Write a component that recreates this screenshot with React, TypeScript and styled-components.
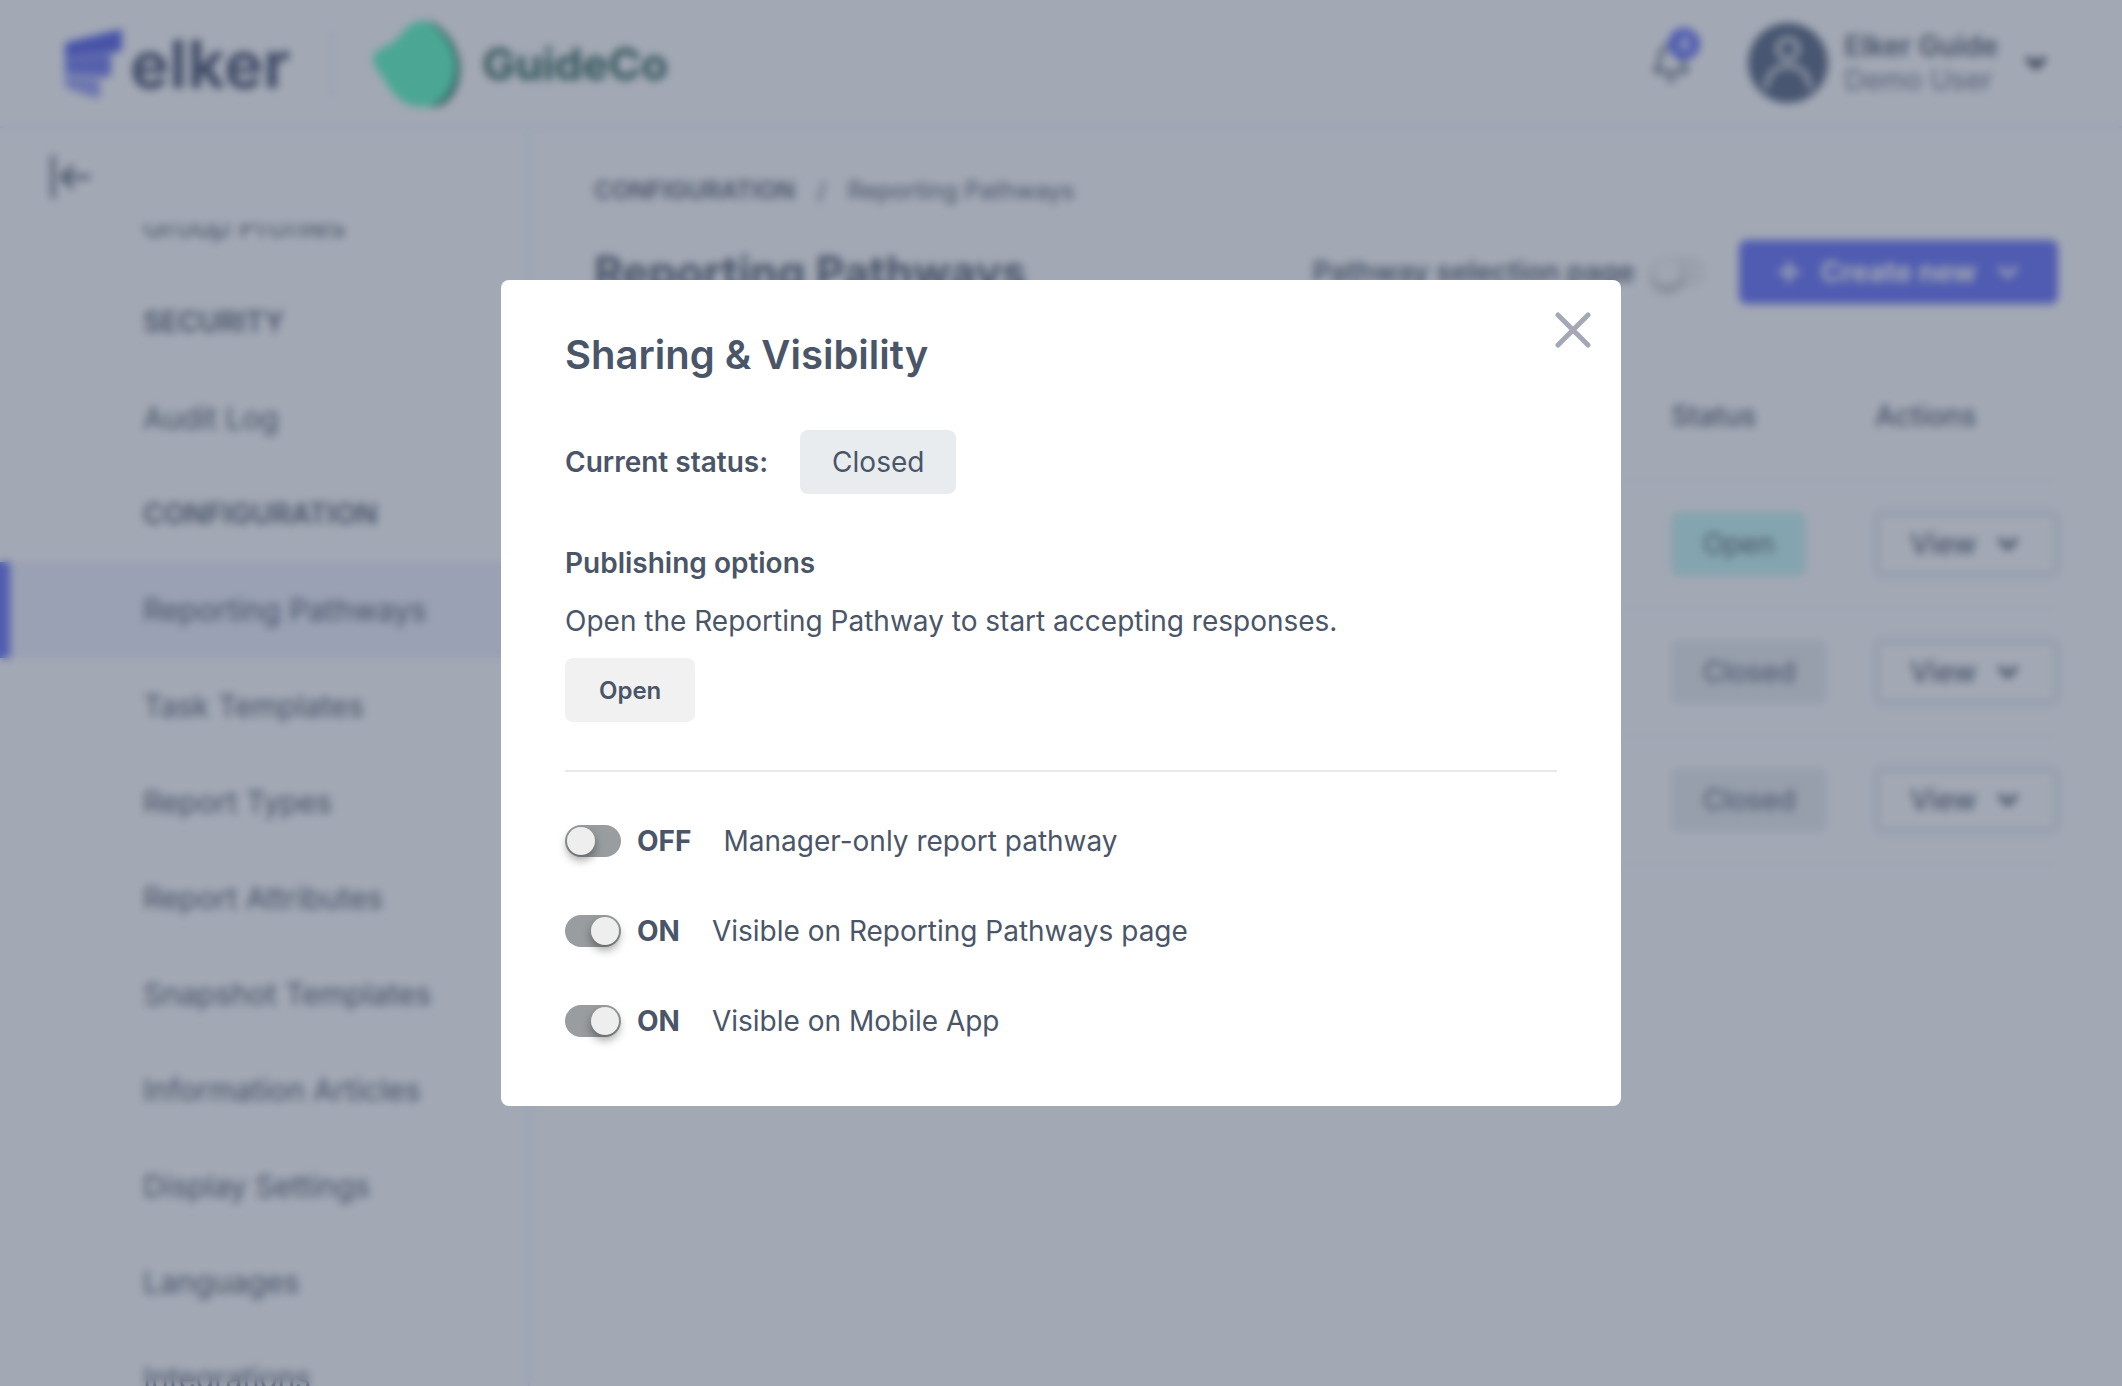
import React, { useState } from "react";
import styled, { createGlobalStyle, css } from "styled-components";
import { ChevronDown, Plus, Bell } from "lucide-react";

const ink = "#4a5568";
const brand = "#5a66f8";

const GlobalStyle = createGlobalStyle`
  *, *::before, *::after { box-sizing: border-box; }
  body {
    margin: 0;
    background: #ffffff;
    color: ${ink};
    font-family: Inter, "Liberation Sans", sans-serif;
    font-size: 28px;
    line-height: 42px;
  }
  button { font-family: inherit; cursor: pointer; }
  h1, h2, h3, p, ul { margin: 0; padding: 0; }
`;

const Page = styled.div`
  display: flex;
  flex-direction: column;
  height: 100vh;
  overflow: hidden;
`;

const TopBar = styled.header`
  display: flex;
  align-items: center;
  justify-content: space-between;
  flex: none;
  height: 128px;
  padding: 0 64px;
  border-bottom: 2px solid #e2ecfc;
`;

const Brands = styled.div`
  display: flex;
  align-items: center;
  padding-top: 2px;
`;

const BrandLink = styled.a`
  display: flex;
  align-items: center;
  gap: 6px;
  color: #3e4866;
  font-size: 66px;
  font-weight: 700;
  line-height: 80px;
  text-decoration: none;
`;

const BrandDivider = styled.span`
  width: 2px;
  height: 72px;
  margin: 0 40px;
  background: #e8ebfe;
`;

const Company = styled.div`
  display: flex;
  align-items: center;
  gap: 22px;
  color: #1f5a4c;
  font-size: 44px;
  font-weight: 700;
`;

const Account = styled.div`
  display: flex;
  align-items: center;
  gap: 56px;
`;

const BellButton = styled.button`
  position: relative;
  display: flex;
  padding: 0;
  border: 0;
  background: none;
  color: ${ink};
`;

const Badge = styled.span`
  position: absolute;
  top: -14px;
  right: -8px;
  width: 32px;
  height: 32px;
  border-radius: 50%;
  background: ${brand};
  color: #ffffff;
  font-size: 20px;
  font-weight: 600;
  line-height: 32px;
  text-align: center;
`;

const UserButton = styled.button`
  display: flex;
  align-items: center;
  gap: 16px;
  padding: 0 8px 0 0;
  border: 0;
  background: none;
  color: ${ink};
  font-size: 28px;
  line-height: 34px;
  text-align: left;
`;

const UserText = styled.span`
  display: flex;
  flex-direction: column;
  margin-right: 8px;
`;

const UserName = styled.span`
  font-weight: 600;
`;

const UserRole = styled.span`
  color: #68738a;
`;

const Body = styled.div`
  display: flex;
  flex: 1;
  min-height: 0;
`;

const Sidebar = styled.aside`
  display: flex;
  flex-direction: column;
  flex: none;
  width: 530px;
  border-right: 2px solid #e2ecfc;
`;

const CollapseButton = styled.button`
  display: flex;
  align-items: center;
  flex: none;
  height: 96px;
  padding: 2px 48px 0;
  border: 0;
  background: none;
  color: ${ink};
`;

const Nav = styled.nav`
  flex: 1;
  min-height: 0;
  overflow: hidden;
`;

/* The list rests scrolled by half a row. */
const NavList = styled.ul`
  margin-top: -46px;
  list-style: none;
`;

const rowBox = css`
  display: flex;
  align-items: center;
  height: 96px;
  padding-left: 143px;
`;

const NavHeading = styled.h3`
  ${rowBox}
  font-size: 28px;
  font-weight: 600;
`;

const NavLink = styled.a<{ $active?: boolean }>`
  ${rowBox}
  color: ${ink};
  font-size: 30px;
  text-decoration: none;
  ${(p) =>
    p.$active &&
    css`
      background: #eef0fe;
      box-shadow: inset 10px 0 0 ${brand};
    `}
`;

const Main = styled.main`
  flex: 1;
  min-width: 0;
  padding: 42px 64px;
`;

const Breadcrumb = styled.nav`
  display: flex;
  gap: 22px;
  font-size: 24px;
`;

const CrumbRoot = styled.a`
  color: ${ink};
  font-weight: 600;
  text-decoration: none;
`;

const TitleRow = styled.div`
  display: flex;
  align-items: center;
  justify-content: space-between;
  margin-top: 28px;
`;

const PageTitle = styled.h1`
  font-size: 44px;
  font-weight: 700;
  line-height: 64px;
`;

const TitleActions = styled.div`
  display: flex;
  align-items: center;
  gap: 32px;
`;

const PageSwitch = styled.label`
  display: flex;
  align-items: center;
  gap: 16px;
  font-weight: 600;
`;

const CreateButton = styled.button`
  display: flex;
  align-items: center;
  gap: 16px;
  height: 64px;
  padding: 0 34px;
  border: 0;
  border-radius: 8px;
  background: ${brand};
  color: #ffffff;
  font-size: 28px;
  font-weight: 700;
`;

const Table = styled.table`
  width: 100%;
  margin-top: 48px;
  border-collapse: collapse;
  table-layout: fixed;
`;

const HeadCell = styled.th<{ $width?: number }>`
  width: ${(p) => (p.$width ? `${p.$width}px` : "auto")};
  height: 128px;
  padding: 0;
  border-bottom: 1px solid #e8ecef;
  font-weight: 500;
  text-align: left;
`;

const Cell = styled.td`
  height: 128px;
  padding: 0;
  border-bottom: 1px solid #e8ecef;
`;

const Pill = styled.span<{ $open?: boolean }>`
  display: inline-block;
  padding: 11px 32px;
  border-radius: 8px;
  background: ${(p) => (p.$open ? "#c2f8f4" : "#e8ecef")};
`;

const ViewButton = styled.button`
  display: flex;
  align-items: center;
  justify-content: space-between;
  width: 100%;
  height: 66px;
  padding: 0 32px;
  border: 3px solid #cbd5e4;
  border-radius: 8px;
  background: #ffffff;
  color: ${ink};
  font-size: 28px;
  font-weight: 500;
`;

const Overlay = styled.div`
  position: fixed;
  inset: 0;
  display: flex;
  align-items: center;
  justify-content: center;
  background: rgba(70, 82, 106, 0.5);
  backdrop-filter: blur(4px);
`;

const Dialog = styled.section`
  position: relative;
  display: flex;
  flex-direction: column;
  gap: 48px;
  width: 1120px;
  max-width: 100%;
  padding: 48px 64px 64px;
  border-radius: 8px;
  background: #ffffff;
`;

const DialogTitle = styled.h2`
  font-size: 40px;
  font-weight: 600;
  line-height: 54px;
`;

const CloseButton = styled.button`
  position: absolute;
  top: 32px;
  right: 30px;
  display: flex;
  padding: 0;
  border: 0;
  background: none;
  color: #a3a8b4;
`;

const StatusRow = styled.div`
  display: flex;
  align-items: center;
  gap: 32px;
`;

const Label = styled.span`
  font-weight: 600;
`;

const Publishing = styled.div`
  display: flex;
  flex-direction: column;
  align-items: flex-start;
  gap: 16px;
`;

const SectionTitle = styled.h3`
  font-size: 28px;
  font-weight: 600;
`;

const OpenButton = styled.button`
  height: 64px;
  padding: 0 34px;
  border: 0;
  border-radius: 8px;
  background: #f1f1f2;
  color: ${ink};
  font-size: 24px;
  font-weight: 600;
`;

const Rule = styled.hr`
  width: 100%;
  height: 2px;
  margin: 0;
  border: 0;
  background: #e7e8ea;
`;

const Option = styled.label`
  display: flex;
  align-items: center;
  gap: 16px;
`;

const State = styled.span`
  margin-right: 16px;
  font-weight: 700;
`;

const Switch = styled.input<{ $faint?: boolean }>`
  appearance: none;
  flex: none;
  width: 56px;
  height: 32px;
  margin: 0;
  padding: 2px;
  border-radius: 16px;
  background: ${(p) => (p.$faint ? "#f1f2f2" : "#999d9f")};
  cursor: pointer;

  &::before {
    content: "";
    display: block;
    width: 28px;
    height: 28px;
    border-radius: 50%;
    background: ${(p) => (p.$faint ? "#fafafa" : "#eeeeee")};
    box-shadow: 0 5px 10px rgba(0, 0, 0, 0.38);
  }

  &:checked::before {
    margin-left: 24px;
  }
`;

const ElkerMark = () => (
  <svg width="60" height="70" viewBox="0 0 60 70" aria-hidden="true">
    <path d="M1 17 Q1 14 4 13 L58 0 V19 Q58 23 54 23 L1 28 Z" fill="#4a55e8" />
    <path d="M1 29 L47 25 V44 Q47 48 43 48 L1 45 Z" fill="#6670f0" />
    <path d="M1 47 L36 50 V66 Q36 70 32 69 L5 60 Q1 58 1 54 Z" fill="#949cf4" />
  </svg>
);

const GuideMark = () => (
  <svg width="88" height="88" viewBox="0 0 88 88" aria-hidden="true">
    <path d="M56 1 C72 5 88 28 88 48 C88 68 78 87 60 87 L48 80 Z" fill="#16624e" />
    <path d="M50 1 C66 1 84 28 84 46 C84 66 72 87 50 87 C28 87 18 70 10 56 C4 48 1 44 1 40 C1 30 12 28 20 23 C32 14 36 1 50 1 Z" fill="#50fcbe" />
  </svg>
);

const Avatar = () => (
  <svg width="80" height="80" viewBox="0 0 80 80" aria-hidden="true">
    <circle cx="40" cy="40" r="40" fill="#4a5a78" />
    <g fill="none" stroke="#ffffff" strokeWidth="4" strokeLinecap="round">
      <circle cx="40" cy="26" r="10" />
      <path d="M18 64 C20 50 28 43 40 43 C52 43 60 50 62 64" />
    </g>
  </svg>
);

const CollapseIcon = () => (
  <svg width="44" height="44" viewBox="0 0 44 44" fill="none" stroke="currentColor" strokeWidth="4" strokeLinecap="round" strokeLinejoin="round" aria-hidden="true">
    <path d="M5 2 V42 M41 22 H14 M24 12 L14 22 L24 32" />
  </svg>
);

const CloseIcon = () => (
  <svg width="36" height="36" viewBox="0 0 36 36" fill="none" stroke="currentColor" strokeWidth="5" strokeLinecap="round" aria-hidden="true">
    <path d="M3 3 L33 33 M33 3 L3 33" />
  </svg>
);

const navItems = [
  { label: "Group Profiles" },
  { label: "SECURITY", heading: true },
  { label: "Audit Log" },
  { label: "CONFIGURATION", heading: true },
  { label: "Reporting Pathways", active: true },
  { label: "Task Templates" },
  { label: "Report Types" },
  { label: "Report Attributes" },
  { label: "Snapshot Templates" },
  { label: "Information Articles" },
  { label: "Display Settings" },
  { label: "Languages" },
  { label: "Integrations" },
];

const statuses = ["Open", "Closed", "Closed"];

const initialOptions = [
  { label: "Manager-only report pathway", on: false },
  { label: "Visible on Reporting Pathways page", on: true },
  { label: "Visible on Mobile App", on: true },
];

export default function App() {
  const [options, setOptions] = useState(initialOptions);
  const toggle = (index: number) =>
    setOptions((list) => list.map((o, i) => (i === index ? { ...o, on: !o.on } : o)));

  return (
    <>
      <GlobalStyle />
      <Page>
        <TopBar>
          <Brands>
            <BrandLink href="#">
              <ElkerMark />
              elker
            </BrandLink>
            <BrandDivider />
            <Company>
              <GuideMark />
              GuideCo
            </Company>
          </Brands>
          <Account>
            <BellButton aria-label="Notifications">
              <Bell size={42} strokeWidth={2} />
              <Badge>4</Badge>
            </BellButton>
            <UserButton>
              <Avatar />
              <UserText>
                <UserName>Elker Guide</UserName>
                <UserRole>Demo User</UserRole>
              </UserText>
              <ChevronDown size={28} strokeWidth={5} color="#2d3340" />
            </UserButton>
          </Account>
        </TopBar>
        <Body>
          <Sidebar>
            <CollapseButton aria-label="Collapse menu">
              <CollapseIcon />
            </CollapseButton>
            <Nav>
              <NavList>
                {navItems.map((item) => (
                  <li key={item.label}>
                    {item.heading ? (
                      <NavHeading>{item.label}</NavHeading>
                    ) : (
                      <NavLink href="#" $active={item.active}>
                        {item.label}
                      </NavLink>
                    )}
                  </li>
                ))}
              </NavList>
            </Nav>
          </Sidebar>
          <Main>
            <Breadcrumb>
              <CrumbRoot href="#">CONFIGURATION</CrumbRoot>
              <span>/</span>
              <span>Reporting Pathways</span>
            </Breadcrumb>
            <TitleRow>
              <PageTitle>Reporting Pathways</PageTitle>
              <TitleActions>
                <PageSwitch>
                  Pathway selection page
                  <Switch type="checkbox" $faint />
                </PageSwitch>
                <CreateButton>
                  <Plus size={32} strokeWidth={3} />
                  Create new
                  <ChevronDown size={32} strokeWidth={3} />
                </CreateButton>
              </TitleActions>
            </TitleRow>
            <Table>
              <thead>
                <tr>
                  <HeadCell aria-label="Name" />
                  <HeadCell $width={204}>Status</HeadCell>
                  <HeadCell $width={183}>Actions</HeadCell>
                </tr>
              </thead>
              <tbody>
                {statuses.map((status, i) => (
                  <tr key={i}>
                    <Cell />
                    <Cell>
                      <Pill $open={status === "Open"}>{status}</Pill>
                    </Cell>
                    <Cell>
                      <ViewButton>
                        View
                        <ChevronDown size={30} strokeWidth={4} />
                      </ViewButton>
                    </Cell>
                  </tr>
                ))}
              </tbody>
            </Table>
          </Main>
        </Body>
      </Page>
      <Overlay>
        <Dialog role="dialog" aria-modal="true" aria-labelledby="dialog-title">
          <DialogTitle id="dialog-title">Sharing &amp; Visibility</DialogTitle>
          <CloseButton aria-label="Close">
            <CloseIcon />
          </CloseButton>
          <StatusRow>
            <Label>Current status:</Label>
            <Pill>Closed</Pill>
          </StatusRow>
          <Publishing>
            <SectionTitle>Publishing options</SectionTitle>
            <p>Open the Reporting Pathway to start accepting responses.</p>
            <OpenButton>Open</OpenButton>
          </Publishing>
          <Rule />
          {options.map((option, i) => (
            <Option key={option.label}>
              <Switch type="checkbox" checked={option.on} onChange={() => toggle(i)} />
              <State>{option.on ? "ON" : "OFF"}</State>
              {option.label}
            </Option>
          ))}
        </Dialog>
      </Overlay>
    </>
  );
}
